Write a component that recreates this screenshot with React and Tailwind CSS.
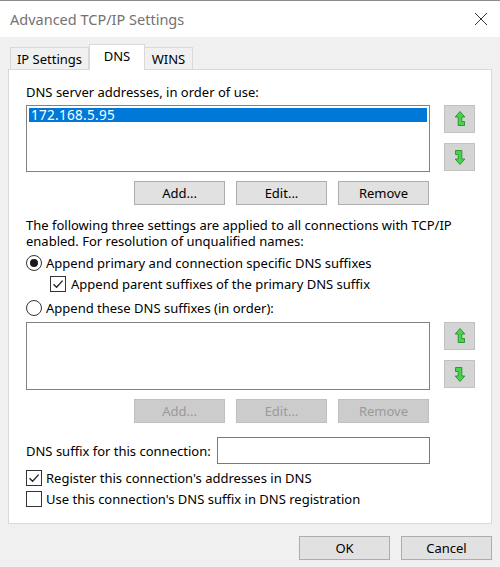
import React from "react";

const font = { fontFamily: '"Noto Sans", "Open Sans", sans-serif' };

function UpArrow() {
  return (
    <svg width="12" height="18" viewBox="0 0 12 18">
      <path
        d="M6 1.5 L10.8 7 L7.8 7 L7.8 11.5 L10.5 11.5 L10.5 15.5 L4.2 15.5 L4.2 7 L1.2 7 Z"
        fill="#48d24e"
        stroke="#23912d"
        strokeWidth="0.9"
        strokeLinejoin="round"
      />
    </svg>
  );
}

function DownArrow() {
  return (
    <svg width="12" height="18" viewBox="0 0 12 18">
      <g transform="rotate(180 6 9)">
        <path
          d="M6 1.5 L10.8 7 L7.8 7 L7.8 11.5 L10.5 11.5 L10.5 15.5 L4.2 15.5 L4.2 7 L1.2 7 Z"
          fill="#48d24e"
          stroke="#23912d"
          strokeWidth="0.9"
          strokeLinejoin="round"
        />
      </g>
    </svg>
  );
}

function ArrowButtons() {
  return (
    <div className="flex flex-col gap-[10px] ml-[14px] shrink-0">
      <div className="w-[31px] h-[28px] bg-[#d4d4d4] border border-[#c2c2c2] flex items-center justify-center">
        <UpArrow />
      </div>
      <div className="w-[31px] h-[28px] bg-[#d4d4d4] border border-[#c2c2c2] flex items-center justify-center">
        <DownArrow />
      </div>
    </div>
  );
}

function Btn({ children, disabled }) {
  return (
    <div
      className={
        disabled
          ? "w-[91px] h-[24px] bg-[#cccccc] border border-[#bfbfbf] text-[#9a9a9a] flex items-center justify-center"
          : "w-[91px] h-[24px] bg-[#e1e1e1] border border-[#adadad] text-black flex items-center justify-center"
      }
    >
      {children}
    </div>
  );
}

function Radio({ checked }) {
  return (
    <div className="w-[16px] h-[16px] rounded-full border border-[#333] bg-white flex items-center justify-center shrink-0">
      {checked && <div className="w-[8px] h-[8px] rounded-full bg-[#1a1a1a]" />}
    </div>
  );
}

function Check({ checked }) {
  return (
    <div className="w-[16px] h-[16px] border border-[#333] bg-white flex items-center justify-center shrink-0">
      {checked && (
        <svg width="12" height="12" viewBox="0 0 12 12">
          <path d="M1.5 6.2 L4.6 9.3 L10.6 2.6" fill="none" stroke="#222" strokeWidth="1.3" />
        </svg>
      )}
    </div>
  );
}

export default function App() {
  return (
    <div
      className="w-[500px] h-[567px] bg-[#f0f0f0] flex flex-col text-[13px] leading-[18px] text-black overflow-hidden"
      style={font}
    >
      {/* title bar */}
      <div className="h-[37px] shrink-0 bg-white border-t border-[#8c8c8c] flex items-center justify-between pl-[10px] pr-[12px]">
        <span className="text-[14.5px] text-[#727272]">Advanced TCP/IP Settings</span>
        <svg width="14" height="14" viewBox="0 0 14 14">
          <path d="M1 1 L13 13 M13 1 L1 13" stroke="#333" strokeWidth="1" />
        </svg>
      </div>

      <div className="flex flex-col pt-[7px] pl-[8px] pr-[8px]">
        {/* tabs */}
        <div className="flex items-end h-[25px] pl-[2px] relative z-10">
          <div className="w-[79px] h-[22px] border border-b-0 border-[#d9d9d9] bg-[#f0f0f0] flex items-center justify-center">
            IP Settings
          </div>
          <div className="w-[56px] border border-b-0 border-[#d9d9d9] bg-white flex items-start justify-center pt-[2px] -mb-px h-[26px]">
            DNS
          </div>
          <div className="w-[48px] h-[22px] border border-b-0 border-l-0 border-[#d9d9d9] bg-[#f0f0f0] flex items-center justify-center">
            WINS
          </div>
        </div>

        {/* tab page */}
        <div className="h-[455px] border border-[#d9d9d9] bg-white flex flex-col pl-[17px] pt-[13px]">
          <div>DNS server addresses, in order of use:</div>
          <div className="flex mt-[4px]">
            <div className="w-[404px] h-[67px] shrink-0 border border-[#828282] bg-white p-[2px]">
              <div className="h-[14px] bg-[#0078d7] text-white text-[13.5px] leading-[14px] pl-[2px] tracking-[0.3px]">
                172.168.5.95
              </div>
            </div>
            <ArrowButtons />
          </div>
          <div className="flex gap-[11px] mt-[9px] pl-[108px]">
            <Btn>Add...</Btn>
            <Btn>Edit...</Btn>
            <Btn>Remove</Btn>
          </div>

          <div className="mt-[12px] leading-[16px]">
            <div>The following three settings are applied to all connections with TCP/IP</div>
            <div>enabled. For resolution of unqualified names:</div>
          </div>
          <div className="flex items-center gap-[4px] mt-[5px]">
            <Radio checked />
            <span>Append primary and connection specific DNS suffixes</span>
          </div>
          <div className="flex items-center gap-[5px] mt-[3px] pl-[24px]">
            <Check checked />
            <span>Append parent suffixes of the primary DNS suffix</span>
          </div>
          <div className="flex items-center gap-[4px] mt-[6px]">
            <Radio />
            <span>Append these DNS suffixes (in order):</span>
          </div>
          <div className="flex mt-[5px]">
            <div className="w-[404px] h-[68px] shrink-0 border border-[#828282] bg-white" />
            <ArrowButtons />
          </div>
          <div className="flex gap-[11px] mt-[9px] pl-[108px]">
            <Btn disabled>Add...</Btn>
            <Btn disabled>Edit...</Btn>
            <Btn disabled>Remove</Btn>
          </div>

          <div className="flex items-center mt-[14px]">
            <span className="w-[191px]">DNS suffix for this connection:</span>
            <div className="w-[213px] h-[27px] border border-[#7a7a7a] bg-white" />
          </div>
          <div className="flex items-center gap-[4px] mt-[5px]">
            <Check checked />
            <span>Register this connection's addresses in DNS</span>
          </div>
          <div className="flex items-center gap-[4px] mt-[3px]">
            <Check />
            <span>Use this connection's DNS suffix in DNS registration</span>
          </div>
        </div>

        {/* dialog buttons */}
        <div className="flex justify-end gap-[11px] mt-[12px]">
          <Btn>OK</Btn>
          <Btn>Cancel</Btn>
        </div>
      </div>
    </div>
  );
}
